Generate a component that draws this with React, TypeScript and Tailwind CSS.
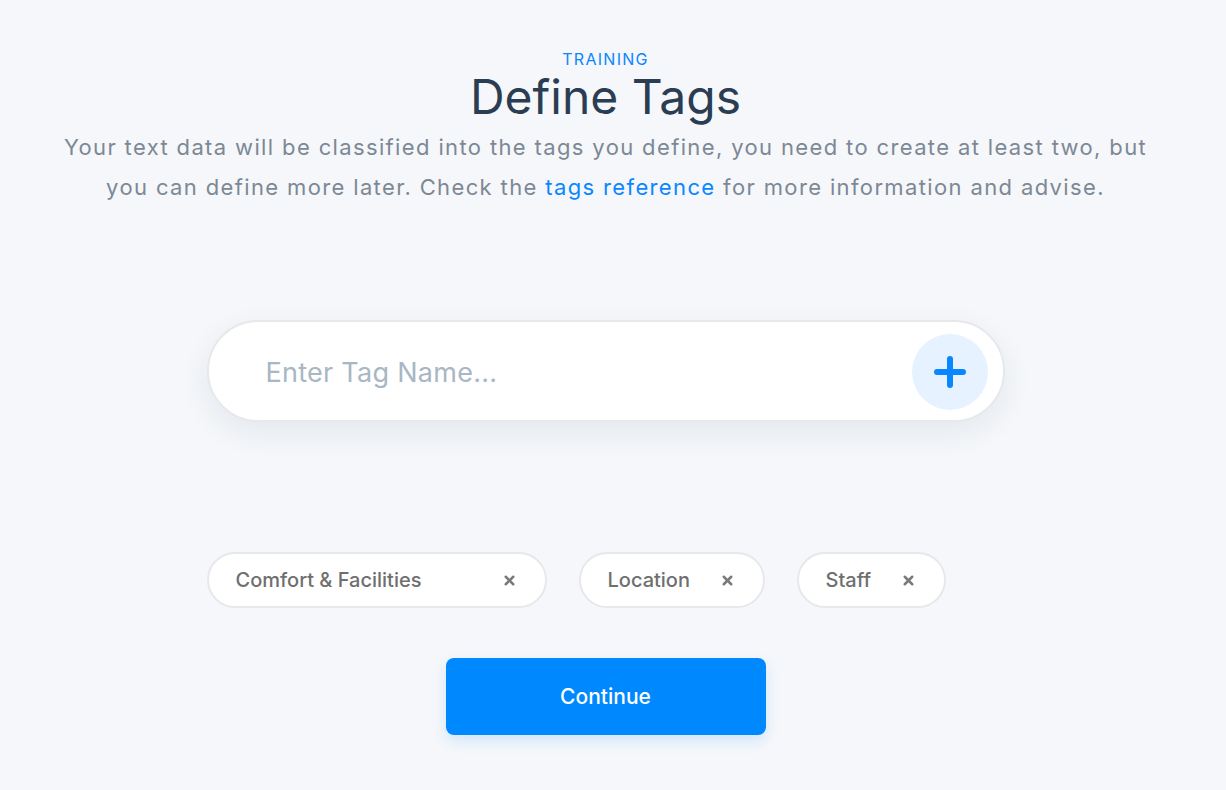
import { X } from "lucide-react";

const tags = [
  { name: "Comfort & Facilities", width: "w-[340px]" },
  { name: "Location", width: "w-[186px]" },
  { name: "Staff", width: "w-[149px]" },
];

export default function App() {
  return (
    <div
      className="min-h-screen w-full bg-[#f5f7fa] flex flex-col items-center pt-[48px] pr-[15px]"
      style={{ fontFamily: "Inter, 'Noto Sans', sans-serif" }}
    >
      <div className="text-[16px] leading-[22px] text-[#0a86ff] tracking-[0.08em]">TRAINING</div>
      <h1 className="text-[48px] leading-[54px] text-[#2b3d52] font-normal">Define Tags</h1>
      <p className="mt-[3px] text-center text-[22px] leading-[40px] tracking-[0.062em] text-[#7d8895] whitespace-nowrap">
        Your text data will be classified into the tags you define, you need to create at least two, but
        <br />
        you can define more later. Check the <a className="text-[#0a86ff]">tags reference</a> for more
        information and advise.
      </p>

      <div className="w-[798px] mt-[113px]">
        <div className="h-[102px] rounded-full bg-white border-2 border-[#e6e8eb] shadow-[0_10px_30px_rgba(30,50,80,0.08)] flex items-center pl-[57px] pr-[15px]">
          <input
            className="flex-1 bg-transparent outline-none pt-[4px] text-[27px] tracking-[0.01em] text-[#2b3d52] placeholder:text-[#a9b6c3]"
            placeholder="Enter Tag Name..."
          />
          <button className="mt-[2px] w-[76px] h-[76px] rounded-full bg-[#e6f2ff] flex items-center justify-center">
            <svg width="34" height="34" viewBox="0 0 34 34" fill="none" stroke="#0a86ff" strokeWidth="6" strokeLinecap="round">
              <path d="M17 4v26M4 17h26" />
            </svg>
          </button>
        </div>

        <div className="mt-[130px] flex gap-[32px]">
          {tags.map((t) => (
            <div
              key={t.name}
              className={`${t.width} h-[56px] rounded-full bg-white border-2 border-[#e6e8eb] flex items-center justify-between pl-[27px] pr-[28px]`}
            >
              <span className="text-[20px] font-medium text-[#6f6f6f]">{t.name}</span>
              <X size={15} strokeWidth={4} className="text-[#7a7a7a]" />
            </div>
          ))}
        </div>
      </div>

      <button className="mt-[50px] w-[320px] h-[77px] rounded-[8px] bg-[#0088ff] text-white text-[21px] font-medium shadow-[0_6px_14px_rgba(0,136,255,0.15)]">
        Continue
      </button>
    </div>
  );
}
